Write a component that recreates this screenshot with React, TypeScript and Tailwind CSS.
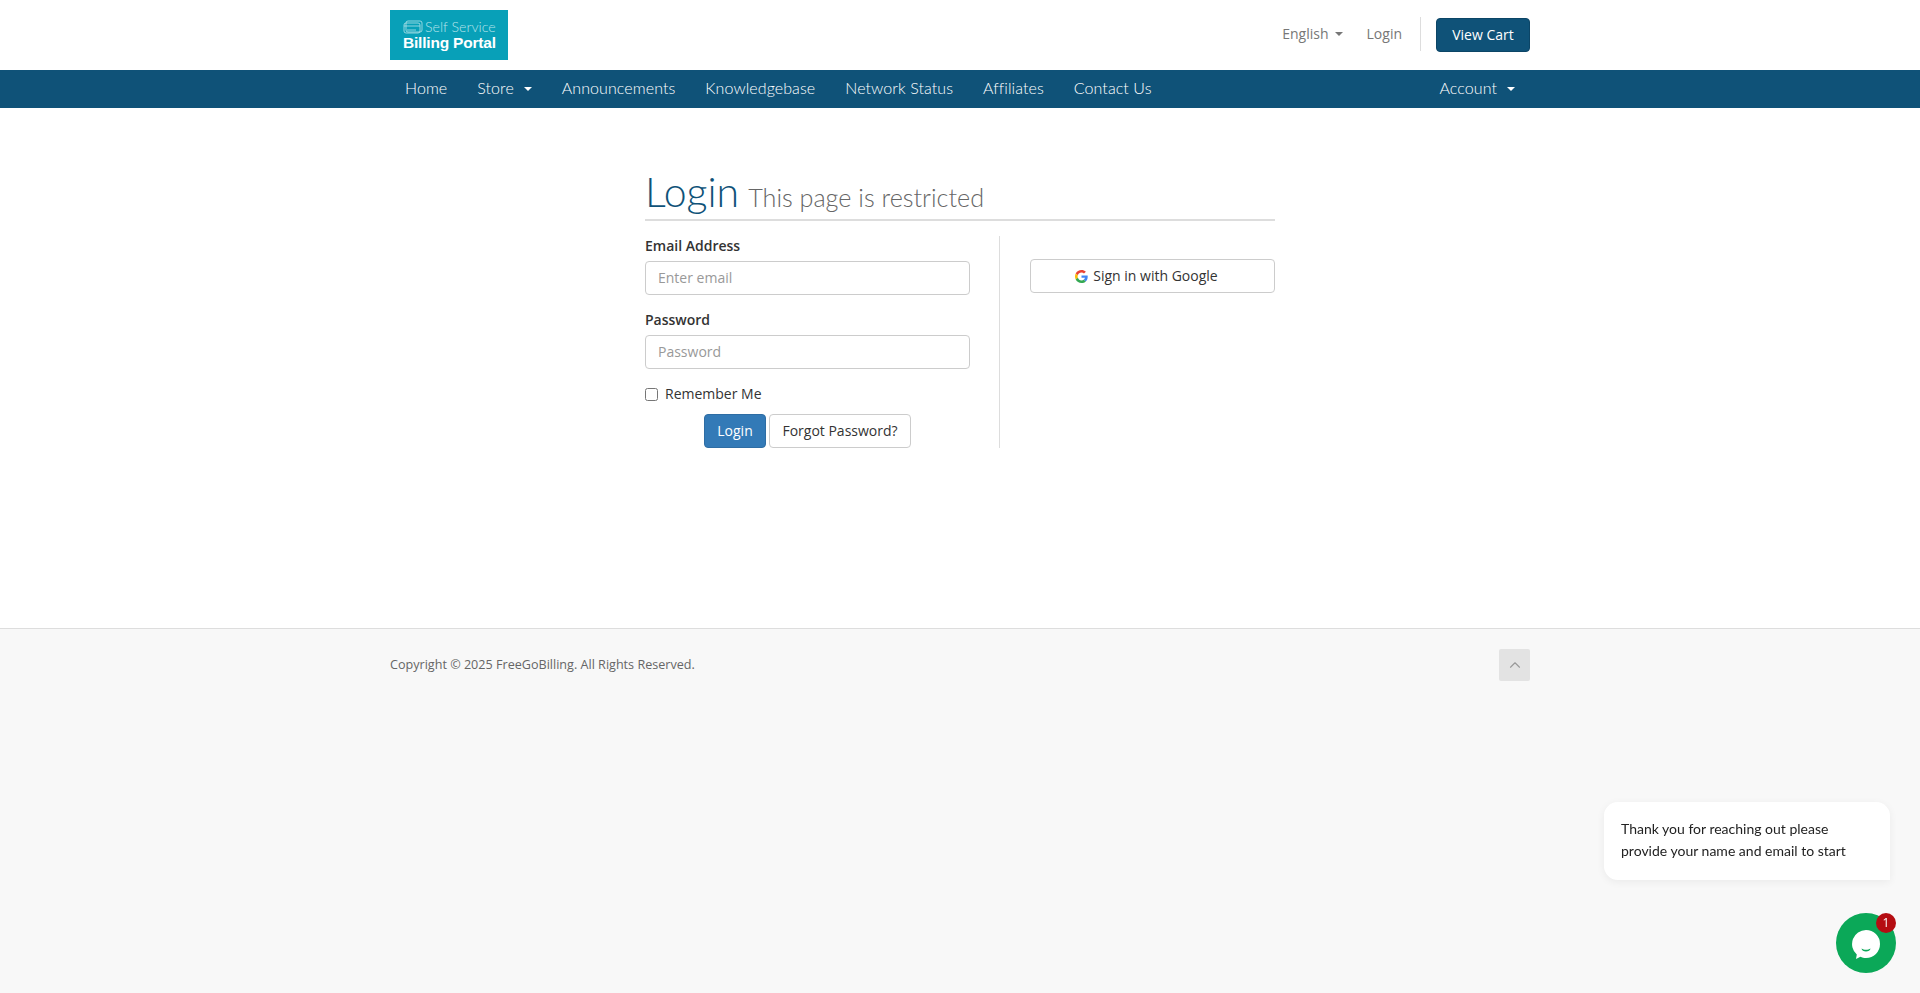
import { ChevronUp } from "lucide-react";

const navLeft = ["Home", "Store", "Announcements", "Knowledgebase", "Network Status", "Affiliates", "Contact Us"];

function Caret({ className }: { className: string }) {
  return <span className={`inline-block w-0 h-0 border-x-4 border-x-transparent border-t-4 ${className}`} />;
}

export default function App() {
  return (
    <div className="h-[993px] flex flex-col bg-white font-['Open_Sans',sans-serif] text-sm text-[#333] overflow-hidden">
      {/* Header */}
      <header className="h-[70px] shrink-0">
        <div className="w-[1140px] mx-auto h-full flex items-center justify-between">
          <div className="w-[118px] h-[50px] pb-[2px] bg-[#08a0b8] flex flex-col justify-center pl-[13px] text-white leading-none font-['Liberation_Sans',sans-serif]">
            <div className="flex items-center gap-[2px] h-[16px] mt-[1px] text-[#b5e3ea] font-['Lato',sans-serif] font-light text-[14.2px]">
              <svg width="20" height="14" viewBox="0 0 20 14" fill="none" stroke="currentColor" strokeWidth="0.8">
                <rect x="3" y="1" width="16" height="11" rx="2" />
                <rect x="1" y="3" width="16" height="10" rx="2" />
                <path d="M1 6h16M4 10h9" />
              </svg>
              <span>Self Service</span>
            </div>
            <div className="text-[15.5px] font-bold tracking-[-0.2px]">Billing Portal</div>
          </div>
          <div className="flex items-center text-[#777] -mt-[2px]">
            <span className="flex items-center gap-[6px]">English <Caret className="border-t-[#777]" /></span>
            <span className="ml-[24px]">Login</span>
            <span className="ml-[18px] w-px h-[34px] bg-[#ddd]" />
            <button className="ml-[15px] mt-[2px] h-[34px] w-[94px] rounded-[4px] bg-[#0f5278] border border-[#0c4566] text-white text-[14px]">View Cart</button>
          </div>
        </div>
      </header>

      {/* Nav */}
      <nav className="h-[38px] shrink-0 bg-[#0f5278] text-[16px] tracking-[0.08px] text-white font-['Lato',sans-serif] font-light">
        <div className="w-[1140px] mx-auto h-full flex items-center justify-between pb-[2px]">
          <div className="flex items-center">
            {navLeft.map((item) => (
              <span key={item} className="px-[15px] flex items-center gap-[10px]">
                {item}
                {item === "Store" && <Caret className="border-t-white mt-[2px]" />}
              </span>
            ))}
          </div>
          <span className="px-[15px] flex items-center gap-[10px]">Account <Caret className="border-t-white mt-[2px]" /></span>
        </div>
      </nav>

      {/* Main */}
      <main className="h-[520px] shrink-0 pt-[64px]">
        <div className="w-[630px] mx-auto">
          <div className="border-b-2 border-[#ddd] h-[49px] flex items-baseline gap-[9px] font-['Lato',sans-serif] font-light">
            <h1 className="text-[41px] text-[#0f5278] leading-[40px]">Login</h1>
            <small className="text-[25.2px] text-[#666]">This page is restricted</small>
          </div>
          <div className="flex mt-[15px]">
            <form className="w-[325px]">
              <label className="block font-semibold leading-[20px] mb-[5px]">Email Address</label>
              <input placeholder="Enter email" className="block w-full h-[34px] px-3 pb-[2px] border border-[#ccc] rounded-[4px] placeholder:text-[#999] outline-none" />
              <label className="block font-semibold leading-[20px] mt-[15px] mb-[5px]">Password</label>
              <input placeholder="Password" className="block w-full h-[34px] px-3 pb-[2px] border border-[#ccc] rounded-[4px] placeholder:text-[#999] outline-none" />
              <label className="flex items-center gap-[7px] mt-[15px] leading-[20px]">
                <input type="checkbox" className="w-[13px] h-[13px]" />
                Remember Me
              </label>
              <div className="flex justify-center gap-[3px] mt-[10px]">
                <button type="button" className="h-[34px] w-[62px] rounded-[4px] bg-[#337ab7] border border-[#2e6da4] text-white">Login</button>
                <button type="button" className="h-[34px] w-[142px] rounded-[4px] bg-white border border-[#ccc]">Forgot Password?</button>
              </div>
            </form>
            <div className="ml-[29px] w-px bg-[#ddd]" />
            <div className="ml-[30px] flex-1 pt-[23px]">
              <button className="w-full h-[34px] pr-[12px] rounded-[4px] bg-white border border-[#ccc] flex items-center justify-center gap-[5px]">
                <svg width="13" height="13" viewBox="0 0 48 48">
                  <path fill="#EA4335" d="M24 9.500c3.500 0 6.700 1.200 9.200 3.600l6.900-6.900C35.900 2.400 30.500 0 24 0 14.600 0 6.500 5.400 2.600 13.200l8 6.200C12.500 13.700 17.800 9.500 24 9.500z" />
                  <path fill="#4285F4" d="M46.900 24.500c0-1.600-.1-3.100-.4-4.500H24v9h12.900c-.6 3-2.200 5.500-4.800 7.200l7.700 6c4.500-4.200 7.100-10.300 7.100-17.700z" />
                  <path fill="#FBBC05" d="M10.500 28.600c-.5-1.400-.8-3-.8-4.600s.3-3.200.8-4.600l-8-6.200C.9 16.500 0 20.100 0 24s.9 7.500 2.600 10.800l7.900-6.200z" />
                  <path fill="#34A853" d="M24 48c6.500 0 11.900-2.100 15.900-5.800l-7.700-6c-2.200 1.400-4.900 2.300-8.200 2.300-6.200 0-11.500-4.200-13.400-9.900l-8 6.200C6.500 42.600 14.600 48 24 48z" />
                </svg>
                Sign in with Google
              </button>
            </div>
          </div>
        </div>
      </main>

      {/* Footer */}
      <footer className="flex-1 bg-[#f8f8f8] border-t border-[#ddd]">
        <div className="w-[1140px] mx-auto pt-[20px] flex items-start justify-between">
          <p className="text-[12.6px] text-[#666] leading-[32px]">Copyright © 2025 FreeGoBilling. All Rights Reserved.</p>
          <span className="w-[31px] h-[32px] rounded-[2px] bg-[#e3e3e3] flex items-center justify-center text-[#999]">
            <ChevronUp size={18} strokeWidth={1.5} />
          </span>
        </div>
      </footer>

      {/* Chat widget */}
      <div className="fixed left-[1604px] top-[802px] w-[286px] h-[78px] rounded-[14px] rounded-br-none bg-white shadow-[0_2px_8px_rgba(0,0,0,0.06)] px-[17px] pt-[16px] font-['Lato',sans-serif] text-[14px] leading-[22px] text-[#222]">
        Thank you for reaching out please provide your name and email to start
      </div>
      <div className="fixed left-[1836px] top-[913px] w-[60px] h-[60px] rounded-full bg-[#0ba858] flex items-center justify-center">
        <svg width="30" height="30" viewBox="0 0 30 30" className="mt-[2px]">
          <path fill="#fff" d="M15 1a14 14 0 0 1 0 28c-2 0-4-.4-5.600-1.200L5 30l.8-4.500A14 14 0 0 1 15 1z" />
          <path fill="#0ba858" d="M10.500 19.500c2.500 1.800 6.500 1.800 9 0-.2 1.800-2.200 3-4.500 3s-4.300-1.200-4.500-3z" />
        </svg>
        <span className="absolute top-0 right-0 w-5 h-5 rounded-full bg-[#b50d12] text-white text-[12px] leading-5 text-center">1</span>
      </div>
    </div>
  );
}
